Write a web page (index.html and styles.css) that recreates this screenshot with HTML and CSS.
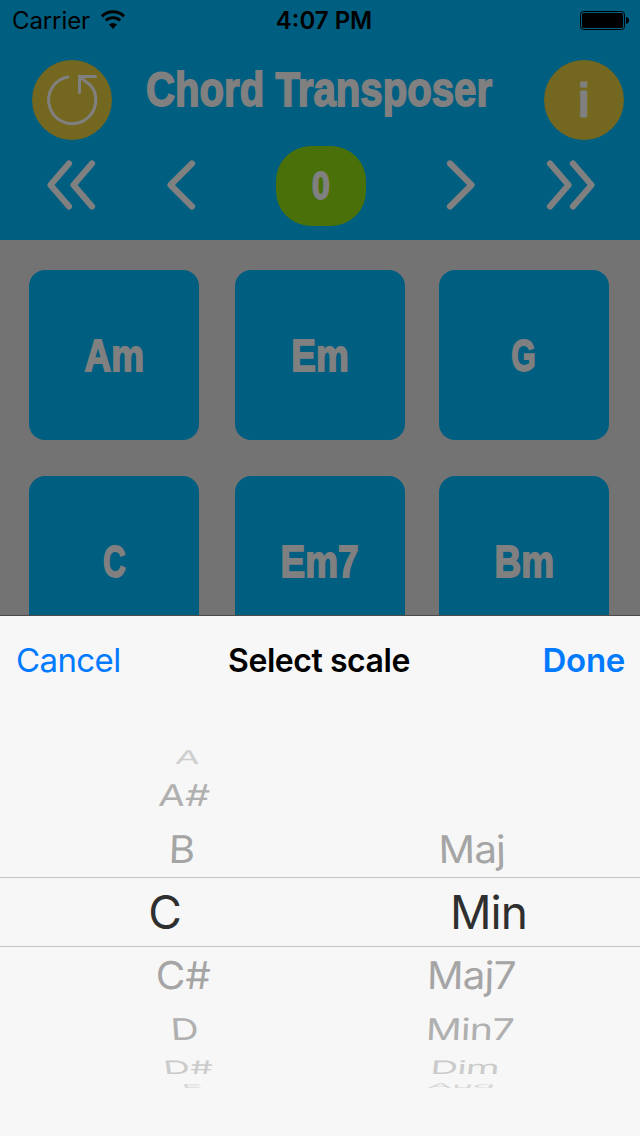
FILE: index.html
```html
<!DOCTYPE html>
<html lang="en">
<head>
    <meta charset="UTF-8">
    <meta name="viewport" content="width=device-width, initial-scale=1.0">
    <title>Chord Transposer</title>
    <link rel="stylesheet" href="styles.css">
</head>
<body>

<div class="screen">
    <header class="header">
        <div class="status-bar">
            <div class="carrier">
                <span>Carrier</span>
                <svg width="26" height="20" viewBox="0 0 26 20">
                    <path d="M2 6.400a15.500 15.500 0 0 1 22 0" fill="none" stroke="#000" stroke-width="3"/>
                    <path d="M5.800 10.500a10.300 10.300 0 0 1 14.400 0" fill="none" stroke="#000" stroke-width="2.800"/>
                    <path d="M9 14.500a6 6 0 0 1 8 0L13 19z"/>
                </svg>
            </div>
            <div class="time">4:07 PM</div>
            <svg class="battery" width="50" height="20" viewBox="0 0 50 20">
                <rect x="0.5" y="0.5" width="44" height="18" rx="3" fill="none" stroke="#000"/>
                <rect x="2" y="2" width="41" height="15" rx="1.5"/>
                <path d="M46 6c4 .5 4 6.500 0 7z"/>
            </svg>
        </div>

        <div class="title-bar">
            <button class="round-btn" aria-label="Reset">
                <svg width="80" height="80" viewBox="0 0 80 80" fill="none" stroke="#808080" stroke-width="3">
                    <path d="M37 16.700A23.600 23.600 0 1 0 57.500 24"/>
                    <path d="M47.500 32.500V16.500H63.500M48 17L57.500 24.500" stroke-linecap="round"/>
                </svg>
            </button>
            <h1><span>Chord Transposer</span></h1>
            <button class="round-btn info" aria-label="Info"><span>i</span></button>
        </div>

        <div class="controls">
            <svg class="icon double" viewBox="0 0 50 50"><path d="M23 3.500L4.500 25L23 46.500M46 3.500L27.500 25L46 46.500"/></svg>
            <svg class="icon prev" viewBox="0 0 30 50"><path d="M26 3.500L4.500 25L26 46.500"/></svg>
            <div class="counter"><span>0</span></div>
            <svg class="icon next" viewBox="0 0 30 50"><path d="M4 3.500L25.500 25L4 46.500"/></svg>
            <svg class="icon double" viewBox="0 0 50 50"><path d="M4 3.500L22.500 25L4 46.500M27 3.500L45.500 25L27 46.500"/></svg>
        </div>
    </header>

    <main class="chords">
        <div class="chord"><span>Am</span></div>
        <div class="chord"><span>Em</span></div>
        <div class="chord single"><span>G</span></div>
        <div class="chord single"><span>C</span></div>
        <div class="chord"><span>Em7</span></div>
        <div class="chord"><span>Bm</span></div>
    </main>

    <section class="picker">
        <div class="toolbar">
            <a class="cancel">Cancel</a>
            <h2>Select scale</h2>
            <a class="done">Done</a>
        </div>
        <div class="wheels">
            <div class="wheel root">
                <div class="row up3"><span>A</span></div>
                <div class="row up2"><span>A#</span></div>
                <div class="row up1"><span>B</span></div>
                <div class="row selected"><span>C</span></div>
                <div class="row down1"><span>C#</span></div>
                <div class="row down2"><span>D</span></div>
                <div class="row down3"><span>D#</span></div>
                <div class="row down4"><span>E</span></div>
            </div>
            <div class="wheel quality">
                <div class="row up3"></div>
                <div class="row up2"></div>
                <div class="row up1"><span>Maj</span></div>
                <div class="row selected"><span>Min</span></div>
                <div class="row down1"><span>Maj7</span></div>
                <div class="row down2"><span>Min7</span></div>
                <div class="row down3"><span>Dim</span></div>
                <div class="row down4"><span>Aug</span></div>
            </div>
            <div class="selection"></div>
        </div>
    </section>
</div>

</body>
</html>
```
FILE: styles.css
```css
body {
    margin: 0;
    font-family: 'Inter', sans-serif;
    background-color: #737373;
}
.screen {
    width: 640px;
    height: 1136px;
    overflow: hidden;
    display: flex;
    flex-direction: column;
}
.header {
    height: 240px;
    flex: none;
    background-color: #005e80;
}

/* status bar */
.status-bar {
    height: 40px;
    display: grid;
    grid-template-columns: 1fr auto 1fr;
    align-items: center;
    padding: 0 10px 0 12px;
    font-size: 24px;
    color: #000;
}
.carrier {
    display: flex;
    align-items: center;
    gap: 10px;
}
.carrier span {
    letter-spacing: -0.1px;
}
.time {
    font-weight: 600;
    padding-left: 6px;
}
.battery {
    justify-self: end;
    margin-top: 2px;
}

/* title row */
.title-bar {
    height: 100px;
    display: flex;
    justify-content: space-between;
    padding: 0 16px 0 32px;
}
.round-btn {
    width: 80px;
    height: 80px;
    margin-top: 20px;
    padding: 0;
    border: none;
    border-radius: 50%;
    background-color: #74671f;
    color: #808080;
}
.round-btn svg {
    display: block;
}
h1,
.info,
.counter,
.chord {
    font-family: 'Liberation Sans', sans-serif;
    font-weight: bold;
    color: #808080;
    -webkit-text-stroke: 1.8px #808080;
}
h1 {
    margin: 19px 17px 0 0;
    width: 346px;
    height: 60px;
    display: flex;
    justify-content: center;
    font-size: 49px;
    line-height: 60px;
    white-space: nowrap;
}
h1 span {
    transform: scaleX(0.82);
}
.info {
    font-size: 49px;
    -webkit-text-stroke-width: 1px;
}
.info span {
    display: block;
    transform: scaleX(0.9);
}

/* transpose controls */
.controls {
    height: 90px;
    display: flex;
    align-items: center;
    padding: 0 44px 0 46px;
}
.icon {
    height: 50px;
    fill: none;
    stroke: #808080;
    stroke-width: 6.2;
    stroke-linecap: round;
    stroke-linejoin: round;
}
.double {
    width: 50px;
}
.prev {
    width: 30px;
    margin: 0 80px 0 70px;
}
.next {
    width: 30px;
    margin: 0 70px 0 80px;
}
.counter {
    width: 90px;
    height: 80px;
    margin-top: 2px;
    border-radius: 35px;
    background-color: #4a7109;
    font-size: 39px;
    line-height: 80px;
    text-align: center;
}
.counter span,
.chord span {
    display: inline-block;
    transform: scaleX(0.82);
}

/* chord grid */
.chords {
    height: 375px;
    flex: none;
    box-sizing: border-box;
    padding: 30px 31px 0 29px;
    display: grid;
    grid-template-columns: 206px 204px 170px;
    grid-auto-rows: 170px;
    row-gap: 36px;
    overflow: hidden;
}
.chord {
    width: 170px;
    border-radius: 16px;
    background-color: #005e80;
    font-size: 45px;
    line-height: 172px;
    text-align: center;
}
.chord.single span {
    transform: scaleX(0.7);
}

/* scale picker */
.picker {
    position: relative;
    flex: 1;
    border-top: 1px solid #4b4b4b;
    background-color: #f7f7f7;
}
.toolbar {
    height: 88px;
    display: grid;
    grid-template-columns: 1fr auto 1fr;
    align-items: center;
    padding: 0 15px 0 16px;
    font-size: 33px;
    letter-spacing: -0.6px;
    color: #007aff;
}
.toolbar h2 {
    margin: 0;
    padding-right: 3px;
    font-size: 32px;
    font-weight: 600;
    letter-spacing: -0.45px;
    color: #000;
}
.done {
    justify-self: end;
    font-weight: 600;
    letter-spacing: -0.3px;
}
.wheels {
    position: relative;
    display: flex;
    height: 349px;
    padding-top: 35px;
    overflow: hidden;
}
.selection {
    position: absolute;
    top: 173px;
    left: 0;
    right: 0;
    height: 68px;
    border-top: 1px solid #c4c4c4;
    border-bottom: 1px solid #c4c4c4;
}
.wheel {
    font-size: 46px;
    color: #a5a5a5;
}
.root {
    width: 330px;
}
.quality {
    width: 308px;
    letter-spacing: -1px;
}
.row {
    box-sizing: border-box;
    display: flex;
    justify-content: center;
    align-items: center;
    line-height: 1;
}
.up3 { height: 36px; color: #cfcfcf; }
.up2 { height: 40px; color: #b0b0b0; }
.up1 { height: 68px; }
.selected { height: 58px; color: #2f2f2f; }
.down1 { height: 68px; }
.down2 { height: 40px; color: #b0b0b0; }
.down3 { height: 36px; color: #cbcbcb; }
.down4 { height: 2px; color: #d8d8d8; }

.root .up3 { padding-left: 45px; }
.root .up2 { padding-left: 38px; }
.root .up1 { padding-left: 34px; }
.root .down1 { padding-left: 36px; }
.root .down2 { padding-left: 40px; }
.root .down3 { padding-left: 46px; }
.root .down4 { padding-left: 54px; }
.quality .up1 { padding-right: 24px; }
.quality .selected { padding-left: 9px; }
.quality .down1 { padding-right: 26px; }
.quality .down2 { padding-right: 28px; }
.quality .down3 { padding-right: 38px; }
.quality .down4 { padding-right: 46px; }

/* rows flatten towards the edges of the drum */
.root .up3 span { transform: scale(0.78, 0.41) skewX(-4deg); }
.root .up2 span { transform: scale(0.84, 0.65) skewX(-4deg); }
.root .up1 span { transform: scale(0.88, 0.83) skewX(-2deg); }
.root .down1 span { transform: scale(0.88, 0.83) skewX(1deg); }
.root .down2 span { transform: scale(0.85, 0.65) skewX(3deg); }
.root .down3 span { transform: scale(0.8, 0.4) skewX(4deg); }
.root .down4 span { transform: scale(0.76, 0.12) skewX(4deg); }
.quality .up1 span { transform: scale(0.88, 0.83) skewX(1deg); }
.quality .down1 span { transform: scale(0.88, 0.83) skewX(-1deg); }
.quality .down2 span { transform: scale(0.86, 0.65) skewX(-2deg); }
.quality .down3 span { transform: scale(0.84, 0.4) skewX(-3deg); }
.quality .down4 span { transform: scale(0.8, 0.14) skewX(-4deg); }
```
